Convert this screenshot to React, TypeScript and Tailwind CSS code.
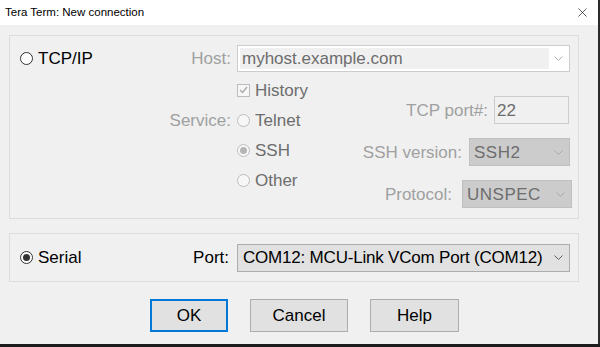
import { X } from "lucide-react";

// Windows-style "New connection" dialog (Tera Term)

const Chevron = ({ color }: { color: string }) => (
  <svg width="9" height="5" viewBox="0 0 9 5" fill="none">
    <polyline points="0.5,0.5 4.5,4.5 8.5,0.5" stroke={color} strokeWidth="1" />
  </svg>
);

const Radio = ({ checked = false, disabled = false }: { checked?: boolean; disabled?: boolean }) => (
  <span
    className={
      disabled
        ? "flex h-[13px] w-[13px] shrink-0 items-center justify-center rounded-full border border-[#bcbcbc] bg-[#f7f7f7]"
        : "flex h-[13px] w-[13px] shrink-0 items-center justify-center rounded-full border border-[#333333] bg-white"
    }
  >
    {checked && (
      <span className={disabled ? "h-[7px] w-[7px] rounded-full bg-[#b5b5b5]" : "h-[7px] w-[7px] rounded-full bg-[#333333]"} />
    )}
  </span>
);

const CheckBox = () => (
  <span className="flex h-[13px] w-[13px] shrink-0 items-center justify-center border border-[#bcbcbc] bg-[#f7f7f7]">
    <svg width="9" height="8" viewBox="0 0 9 8" fill="none">
      <polyline points="1,4 3.5,6.5 8,1" stroke="#a8a8a8" strokeWidth="1.3" />
    </svg>
  </span>
);

const services = [
  { label: "Telnet", caption: "Service:", checked: false },
  { label: "SSH", caption: "", checked: true },
  { label: "Other", caption: "", checked: false },
];

const App = () => {
  return (
    <div className="flex h-[347px] w-[600px] flex-col overflow-hidden bg-[#f0f0f0] font-['Liberation_Sans',Arial,sans-serif] text-[17px] leading-none">
      <div className="flex min-h-0 flex-1">
        <div className="flex w-[598px] flex-col">
          {/* Title bar */}
          <div className="flex h-[25px] items-center justify-between bg-white pl-[5px] pr-[8px]">
            <span className="text-[11.5px] text-black">Tera Term: New connection</span>
            <X className="h-[15px] w-[15px] text-black" strokeWidth={1} />
          </div>

          {/* Body */}
          <div className="flex-1 bg-[#f0f0f0] px-[9px] pt-[10px]">
            {/* TCP/IP group */}
            <div className="h-[184px] w-[570px] border border-[#dcdcdc]">
              <div className="mt-[9px] flex h-[27px] items-center">
                <div className="flex w-[221px] items-center justify-between pl-[10px]">
                  <label className="flex items-center gap-[5px] text-black">
                    <Radio />
                    TCP/IP
                  </label>
                  <span className="text-[#a0a0a0]">Host:</span>
                </div>
                <div className="ml-[6px] flex h-[27px] w-[333px] border border-[#cccccc] bg-white p-[2px]">
                  <div className="flex flex-1 items-center bg-[#f0f0f0] pl-[2px] text-[#6d6d6d]">myhost.example.com</div>
                  <div className="flex w-[18px] items-center justify-center">
                    <Chevron color="#b0b0b0" />
                  </div>
                </div>
              </div>

              <div className="flex">
                <div className="mt-[3px] flex w-[330px] flex-col">
                  <div className="flex h-[30px] items-center">
                    <span className="w-[221px]" />
                    <span className="ml-[6px] flex items-center gap-[5px] text-[#6d6d6d]">
                      <CheckBox />
                      History
                    </span>
                  </div>
                  {services.map((s) => (
                    <div key={s.label} className="flex h-[30px] items-center">
                      <span className="w-[221px] text-right text-[#a0a0a0]">{s.caption}</span>
                      <span className="ml-[6px] flex items-center gap-[5px] text-[#6d6d6d]">
                        <Radio disabled checked={s.checked} />
                        {s.label}
                      </span>
                    </div>
                  ))}
                </div>

                <div className="flex flex-1 flex-col items-end">
                  <div className="mr-[9px] mt-[24px] flex items-center gap-[6px]">
                    <span className="text-[#a0a0a0]">TCP port#:</span>
                    <div className="flex h-[28px] w-[75px] items-center border border-[#cccccc] bg-[#f0f0f0] pl-[2px] text-[#6d6d6d]">
                      22
                    </div>
                  </div>
                  <div className="mr-[8px] mt-[14px] flex items-center gap-[7px]">
                    <span className="text-[#a0a0a0]">SSH version:</span>
                    <div className="flex h-[28px] w-[101px] items-center justify-between border border-[#bfbfbf] bg-[#cccccc] pl-[4px] pr-[6px] tracking-[0.5px] text-[#6d6d6d]">
                      SSH2
                      <Chevron color="#a8a8a8" />
                    </div>
                  </div>
                  <div className="mr-[6px] mt-[14px] flex items-center gap-[10px]">
                    <span className="text-[#a0a0a0]">Protocol:</span>
                    <div className="flex h-[28px] w-[110px] items-center justify-between border border-[#bfbfbf] bg-[#cccccc] pl-[4px] pr-[6px] tracking-[0.5px] text-[#6d6d6d]">
                      UNSPEC
                      <Chevron color="#a8a8a8" />
                    </div>
                  </div>
                </div>
              </div>
            </div>

            {/* Serial group */}
            <div className="mt-[14px] flex h-[49px] w-[570px] items-center border border-[#dcdcdc]">
              <div className="flex w-[221px] items-center justify-between pl-[10px] pr-[2px]">
                <label className="flex items-center gap-[5px] text-black">
                  <Radio checked />
                  Serial
                </label>
                <span className="text-black">Port:</span>
              </div>
              <div className="ml-[6px] flex h-[28px] w-[333px] items-center justify-between border border-[#adadad] bg-[#e1e1e1] pl-[5px] pr-[6px] text-black">
                <span className="tracking-[-0.2px]">COM12: MCU-Link VCom Port (COM12)</span>
                <Chevron color="#606060" />
              </div>
            </div>

            {/* Buttons */}
            <div className="mt-[17px] flex gap-[22px] pl-[141px]">
              <button className="flex h-[33px] w-[78px] items-center justify-center border-2 border-[#0078d7] bg-[#e1e1e1] text-black">
                OK
              </button>
              <button className="flex h-[33px] w-[98px] items-center justify-center border border-[#adadad] bg-[#e1e1e1] text-black">
                Cancel
              </button>
              <button className="flex h-[33px] w-[89px] items-center justify-center border border-[#adadad] bg-[#e1e1e1] text-black">
                Help
              </button>
            </div>
          </div>
        </div>
        <div className="w-[2px] bg-[#2b2b2b]" />
      </div>
      <div className="h-[3px] bg-[#1c1c1c]" />
    </div>
  );
};

export default App;
